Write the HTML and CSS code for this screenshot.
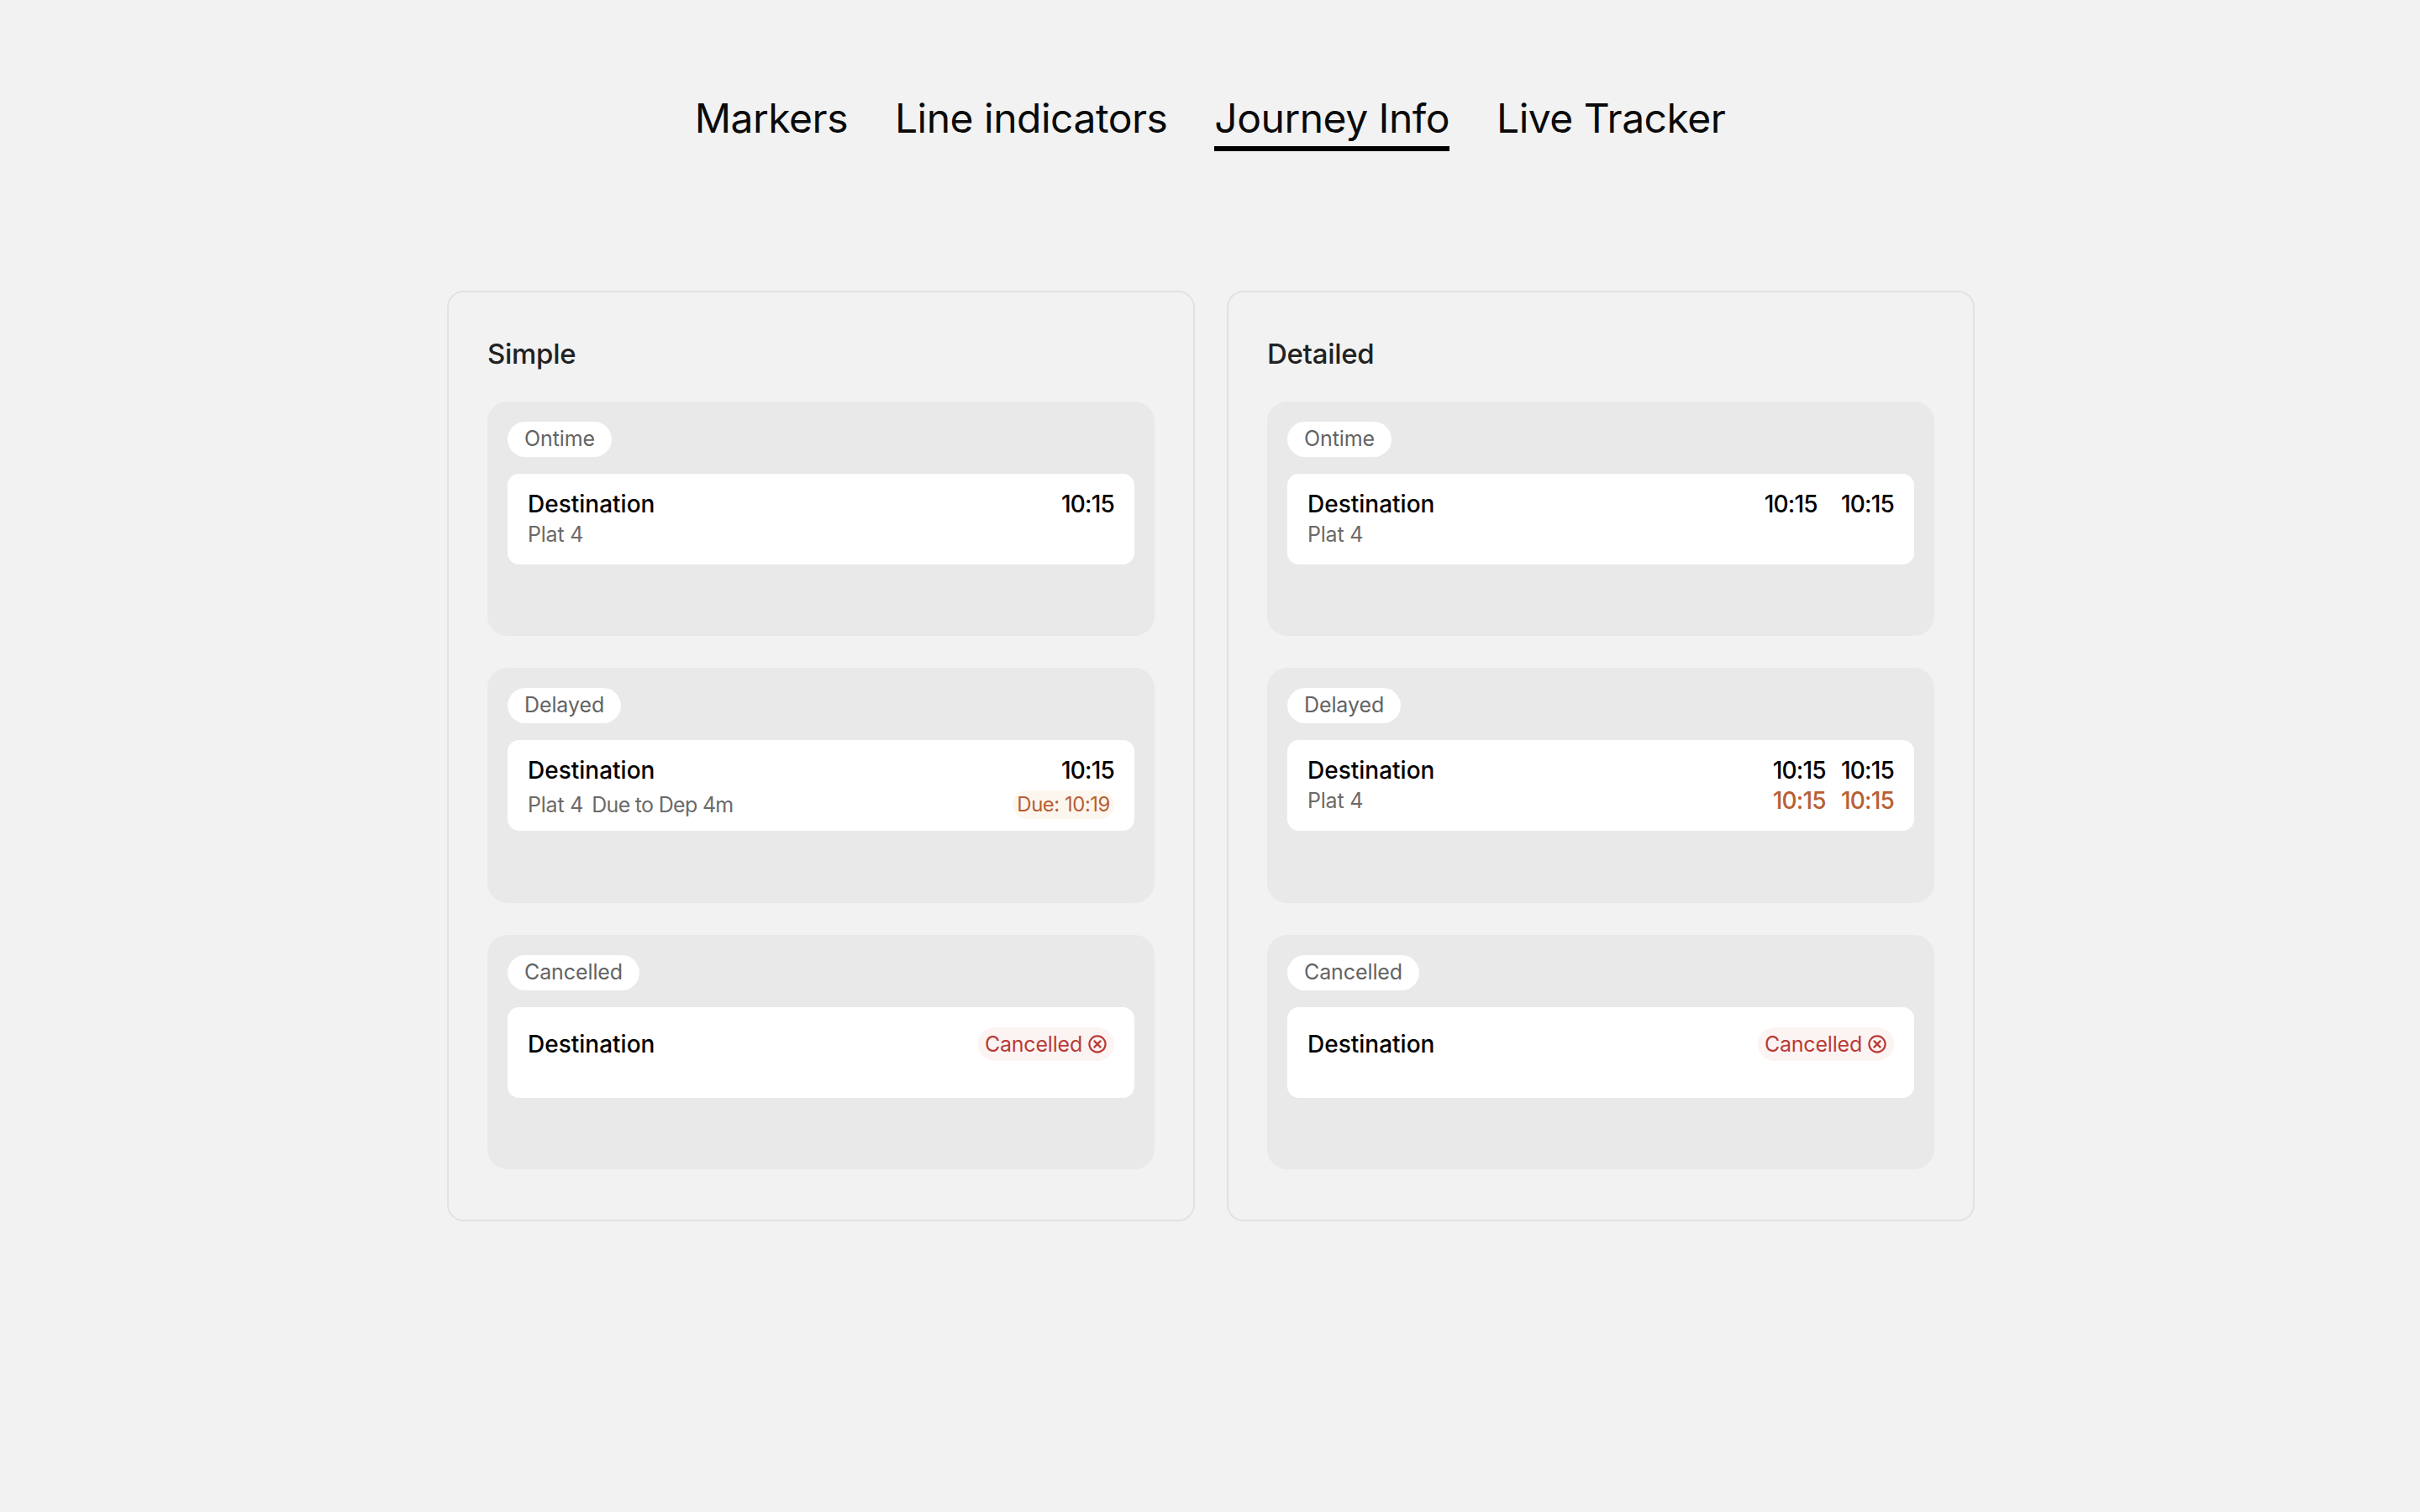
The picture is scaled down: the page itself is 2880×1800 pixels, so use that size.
FILE: index.html
```html
<!DOCTYPE html>
<html lang="en">
<head>
    <meta charset="UTF-8">
    <title>Journey Info</title>
    <link rel="stylesheet" href="styles.css">
</head>
<body>
    <nav class="tabs">
        <a class="tab">Markers</a>
        <a class="tab">Line indicators</a>
        <a class="tab active">Journey Info</a>
        <a class="tab">Live Tracker</a>
    </nav>

    <main class="panels">
        <section class="panel">
            <h2>Simple</h2>
            <div class="group">
                <span class="tag">Ontime</span>
                <div class="card">
                    <div class="row">
                        <span class="dest">Destination</span>
                        <span class="time">10:15</span>
                    </div>
                    <div class="row">
                        <span class="sub">Plat 4</span>
                    </div>
                </div>
            </div>
            <div class="group">
                <span class="tag">Delayed</span>
                <div class="card">
                    <div class="row">
                        <span class="dest">Destination</span>
                        <span class="time">10:15</span>
                    </div>
                    <div class="row row-delay">
                        <span class="sub">Plat 4<span class="sub-gap">Due to Dep 4m</span></span>
                        <span class="due">Due: 10:19</span>
                    </div>
                </div>
            </div>
            <div class="group">
                <span class="tag">Cancelled</span>
                <div class="card">
                    <div class="row row-cancel">
                        <span class="dest">Destination</span>
                        <span class="cancelled">Cancelled
                            <svg viewBox="0 0 24 24" width="24" height="24"><circle cx="12" cy="12" r="9.6"/><path d="M8.4 8.4l7.2 7.2M15.6 8.4l-7.2 7.2"/></svg>
                        </span>
                    </div>
                </div>
            </div>
        </section>

        <section class="panel">
            <h2>Detailed</h2>
            <div class="group">
                <span class="tag">Ontime</span>
                <div class="card">
                    <div class="row">
                        <span class="dest">Destination</span>
                        <span class="times times-wide"><span class="time">10:15</span><span class="time">10:15</span></span>
                    </div>
                    <div class="row">
                        <span class="sub">Plat 4</span>
                    </div>
                </div>
            </div>
            <div class="group">
                <span class="tag">Delayed</span>
                <div class="card">
                    <div class="row">
                        <span class="dest">Destination</span>
                        <span class="times"><span class="time">10:15</span><span class="time">10:15</span></span>
                    </div>
                    <div class="row">
                        <span class="sub">Plat 4</span>
                        <span class="times"><span class="time late">10:15</span><span class="time late">10:15</span></span>
                    </div>
                </div>
            </div>
            <div class="group">
                <span class="tag">Cancelled</span>
                <div class="card">
                    <div class="row row-cancel">
                        <span class="dest">Destination</span>
                        <span class="cancelled">Cancelled
                            <svg viewBox="0 0 24 24" width="24" height="24"><circle cx="12" cy="12" r="9.6"/><path d="M8.4 8.4l7.2 7.2M15.6 8.4l-7.2 7.2"/></svg>
                        </span>
                    </div>
                </div>
            </div>
        </section>
    </main>
</body>
</html>
```

FILE: styles.css
```css
body {
    font-family: Inter, 'Noto Sans', sans-serif;
    background-color: #f2f2f2;
    color: #000;
    margin: 0;
    min-height: 1800px;
}

.tabs {
    display: flex;
    justify-content: center;
    gap: 56px;
    padding-top: 108px;
    height: 238px;
    box-sizing: border-box;
}

.tab {
    height: 66px;
    line-height: 66px;
    font-size: 48px;
    font-weight: 400;
    letter-spacing: -0.5px;
    color: #0a0a0a;
}

.tab.active {
    border-bottom: 6px solid #000;
}

.panels {
    display: grid;
    grid-template-columns: 890px 890px;
    justify-content: center;
    gap: 38px;
    margin-top: 108px;
    padding-left: 2px;
}

.panel {
    display: flex;
    flex-direction: column;
    gap: 38px;
    box-sizing: border-box;
    height: 1108px;
    padding: 46px 46px 60px;
    border: 2px solid #e2e2e2;
    border-radius: 20px;
}

h2 {
    margin: 0;
    height: 46px;
    line-height: 54px;
    font-size: 33px;
    font-weight: 500;
    letter-spacing: -0.3px;
    color: #222;
}

.group {
    display: flex;
    flex-direction: column;
    align-items: flex-start;
    gap: 20px;
    box-sizing: border-box;
    height: 280px;
    padding: 24px;
    background-color: #e9e9e9;
    border-radius: 24px;
}

.tag {
    height: 42px;
    line-height: 40px;
    padding: 0 20px;
    font-size: 25px;
    letter-spacing: -0.1px;
    color: #636363;
    background-color: #fff;
    border-radius: 21px;
}

.card {
    box-sizing: border-box;
    width: 100%;
    height: 108px;
    padding: 18px 24px;
    background-color: #fff;
    border-radius: 14px;
}

.row {
    display: flex;
    justify-content: space-between;
    align-items: center;
    height: 36px;
}

.dest, .time {
    font-size: 28px;
    font-weight: 500;
}

.time {
    letter-spacing: -0.8px;
}

.sub {
    font-size: 25px;
    letter-spacing: -0.2px;
    color: #6a6a6a;
}

.sub-gap {
    margin-left: 10px;
    letter-spacing: -0.7px;
}

.row-delay {
    margin-top: 5px;
}

.row-cancel {
    margin-top: 8px;
}

.times {
    display: flex;
    gap: 18px;
}

.times-wide {
    gap: 28px;
}

.late {
    color: #b85f33;
}

.due {
    height: 34px;
    line-height: 34px;
    padding: 0 5px;
    font-size: 24px;
    letter-spacing: -0.5px;
    color: #b85f33;
    background-color: #fdf6ef;
    border-radius: 17px;
}

.cancelled {
    display: flex;
    align-items: center;
    gap: 6px;
    height: 40px;
    padding: 0 8px;
    font-size: 25px;
    letter-spacing: -0.2px;
    color: #b93a34;
    background-color: #fcf3f3;
    border-radius: 20px;
}

.cancelled svg {
    fill: none;
    stroke: #b93a34;
    stroke-width: 2.2;
    stroke-linecap: round;
}
```
